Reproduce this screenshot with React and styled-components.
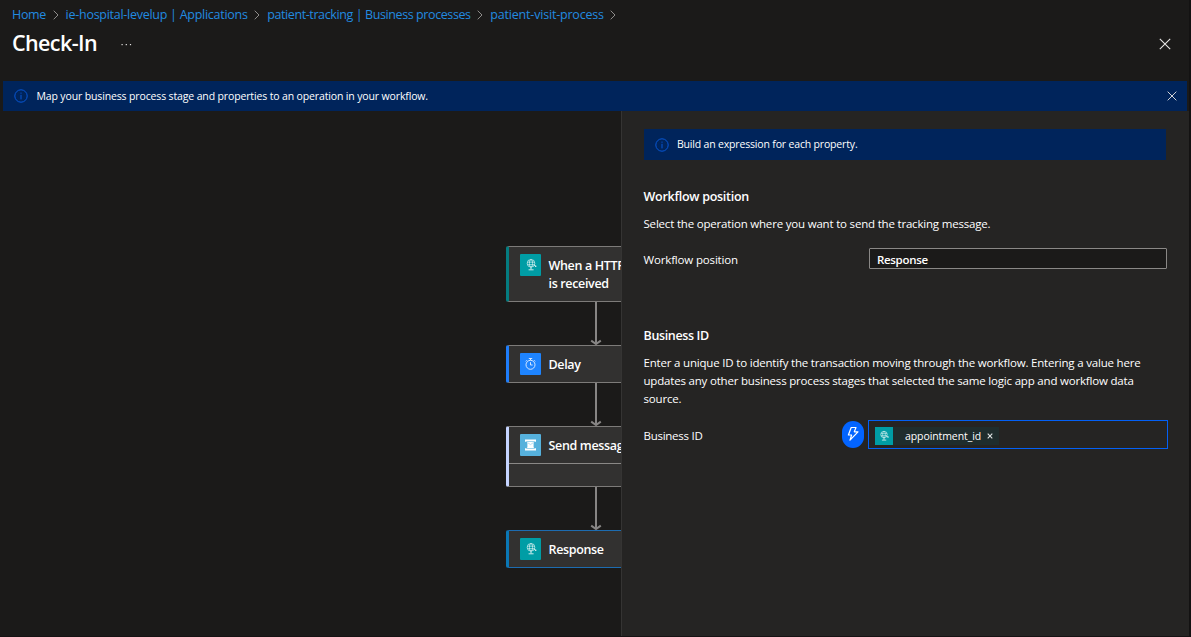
import React from 'react';
import styled, { createGlobalStyle } from 'styled-components';

const GlobalStyle = createGlobalStyle`
  *, *::before, *::after { box-sizing: border-box; }
  body {
    margin: 0;
    background: #1b1a19;
    color: #ffffff;
    font-family: "Open Sans", "Noto Sans", sans-serif;
    overflow: hidden;
  }
`;

const Page = styled.div`
  height: 637px;
  display: flex;
  flex-direction: column;
  background: #1b1a19;
  border-right: 2px solid #131212;
  border-bottom: 1px solid #161213;
`;

const Breadcrumb = styled.nav`
  display: flex;
  align-items: center;
  height: 28px;
  padding-left: 12px;
`;

const Crumb = styled.a`
  flex: none;
  width: ${(p) => p.$width}px;
  padding-top: 2px;
  font-size: 12.5px;
  line-height: 18px;
  letter-spacing: ${(p) => p.$track}px;
  white-space: nowrap;
  color: #228be0;
`;

const CrumbChevron = styled.svg`
  flex: none;
  width: 6px;
  height: 10px;
  margin: 1px 7px 0 6.6px;
  fill: none;
  stroke: #8f8d8b;
`;

const TitleBar = styled.header`
  display: flex;
  align-items: center;
  height: 32px;
  padding: 0 18px 0 12px;
`;

const Title = styled.h1`
  margin: -2px 0 0;
  width: 109px;
  font-size: 21.5px;
  font-weight: 600;
  line-height: 30px;
  letter-spacing: -0.6px;
`;

const MoreDots = styled.svg`
  width: 11px;
  height: 3px;
  fill: #e4e3e2;
`;

const CloseIcon = styled.svg`
  flex: none;
  width: ${(p) => p.$size}px;
  height: ${(p) => p.$size}px;
  margin-left: auto;
  fill: none;
  stroke: #e6e5e4;
  stroke-width: 1.1;
`;

const Banner = styled.div`
  display: flex;
  align-items: center;
  height: 30px;
  margin: 21px 2px 0 3px;
  padding: 0 10px 0 11px;
  background: #00245b;
`;

const Notice = styled.div`
  display: flex;
  align-items: center;
  width: 522px;
  height: 31px;
  padding-left: 11px;
  background: #00245b;
`;

const InfoIcon = styled.svg`
  flex: none;
  width: 14px;
  height: 14px;
  margin-right: 8.5px;
  fill: none;
  stroke: #0757d6;
`;

const BannerText = styled.span`
  font-size: 10.5px;
  line-height: 16px;
  letter-spacing: ${(p) => p.$track}px;
  white-space: nowrap;
`;

const NoticeText = styled(BannerText)`
  margin: -2px 0 0 -0.6px;
`;

const Body = styled.main`
  flex: 1;
  display: flex;
  min-height: 0;
`;

const Canvas = styled.section`
  flex: none;
  width: 621px;
  padding: 135px 0 0 506px;
  overflow: hidden;
`;

const Flow = styled.div`
  display: flex;
  flex-direction: column;
  width: 180px;
`;

const Card = styled.article`
  height: ${(p) => p.$height}px;
  background: #323130;
  border: 1px solid ${(p) => (p.$selected ? '#1d6cb0' : '#7d7b79')};
  border-left: 3px solid ${(p) => p.$accent};
  border-radius: 2px;
`;

const CardHead = styled.div`
  display: flex;
  height: 36px;
  padding: 7px 0 0 11px;
`;

const CardFoot = styled.div`
  height: 23px;
  border-top: 1px solid #8a8886;
`;

const CardTitle = styled.div`
  margin-left: 7.5px;
  padding-top: 3px;
  font-size: 12.5px;
  font-weight: 600;
  line-height: 18px;
  letter-spacing: -0.34px;
  white-space: nowrap;
`;

const IconTile = styled.span`
  flex: none;
  display: flex;
  align-items: center;
  justify-content: center;
  width: ${(p) => p.$width || 21}px;
  height: ${(p) => p.$height || 22}px;
  border-radius: ${(p) => (p.$width ? 0 : 1)}px;
  background: ${(p) => p.$color};
`;

const Connector = styled.svg`
  display: block;
  width: 12px;
  height: 43px;
  margin-left: 84px;
  fill: none;
  stroke: #878584;
  stroke-width: 2;
`;

const Panel = styled.aside`
  flex: 1;
  padding: 18px 0 0 22px;
  background: #252423;
  border-left: 1px solid #353433;
`;

const SectionTitle = styled.h2`
  margin: ${(p) => p.$top}px 0 0 -0.5px;
  font-size: 12.5px;
  font-weight: 600;
  line-height: 18px;
  letter-spacing: ${(p) => p.$track}px;
`;

const Paragraph = styled.p`
  margin: ${(p) => p.$top}px 0 0 -0.5px;
  font-size: 11.5px;
  line-height: 18px;
  letter-spacing: -0.19px;
  white-space: nowrap;
`;

const FieldRow = styled.div`
  display: flex;
  align-items: center;
  height: ${(p) => p.$height}px;
  margin-top: ${(p) => p.$top}px;
`;

const FieldLabel = styled.label`
  flex: none;
  width: ${(p) => p.$width}px;
  margin-left: -0.5px;
  padding-top: 2px;
  font-size: 11.5px;
  line-height: 18px;
  letter-spacing: ${(p) => p.$track}px;
`;

const PositionField = styled.div`
  display: flex;
  align-items: center;
  width: 298px;
  height: 21px;
  padding: 1px 0 0 7px;
  border: 1px solid #8a8886;
  border-radius: 1px;
  background: #1b1a19;
  font-size: 11.5px;
  font-weight: 600;
  letter-spacing: -0.32px;
`;

const DynamicButton = styled.button`
  display: flex;
  align-items: center;
  justify-content: center;
  flex: none;
  width: 22px;
  height: 27px;
  margin: 0 4px 1px 0;
  padding: 0;
  border: 0;
  border-radius: 11px;
  background: #0364ff;
`;

const TokenField = styled.div`
  display: flex;
  align-items: center;
  width: 300px;
  height: 29px;
  padding: 2px 0 0 6px;
  border: 1px solid #0360f5;
`;

const Token = styled.span`
  display: flex;
  align-items: center;
  width: 124px;
  height: 18px;
  background: #1f2d2d;
  font-size: 10.5px;
  line-height: 16px;
  letter-spacing: -0.09px;
`;

const TokenLabel = styled.span`
  width: 81.5px;
  margin-left: 12px;
`;

const TokenRemove = styled.svg`
  width: 6px;
  height: 6px;
  margin-top: 1px;
  fill: none;
  stroke: #e0e4e4;
  stroke-width: 1.1;
`;

function Chevron() {
  return (
    <CrumbChevron viewBox="0 0 6 10">
      <path d="M0.7 0.7 L5 5 L0.7 9.3" />
    </CrumbChevron>
  );
}

function Close({ size }) {
  return (
    <CloseIcon $size={size} viewBox="0 0 12 12">
      <path d="M0.8 0.8 L11.2 11.2 M11.2 0.8 L0.8 11.2" />
    </CloseIcon>
  );
}

function Info() {
  return (
    <InfoIcon viewBox="0 0 14 14">
      <circle cx="7" cy="7" r="6.2" />
      <path d="M7 3.6 V4.7 M7 5.8 V10.4" />
    </InfoIcon>
  );
}

function RequestGlyph({ size = 14 }) {
  return (
    <svg width={size} height={size} viewBox="0 0 14 14" fill="none" stroke="#dff4f4" strokeWidth="0.7">
      <circle cx="7" cy="5.3" r="3.8" />
      <ellipse cx="7" cy="5.3" rx="1.6" ry="3.8" />
      <path d="M3.4 4.2 H10.6 M3.4 6.6 H10.6" strokeWidth="0.6" />
      <path d="M7 9.1 V11.4" strokeWidth="1" />
      <path d="M4.6 11.8 H9.6" strokeWidth="0.9" />
      <path d="M10 7.2 L11.8 8.2" strokeWidth="0.8" />
      <circle cx="11.7" cy="8.2" r="0.8" fill="#dff4f4" stroke="none" />
    </svg>
  );
}

function TimerGlyph() {
  return (
    <svg width="13" height="14" viewBox="0 0 13 14" fill="none" stroke="#e6f0ff" strokeWidth="0.9">
      <circle cx="6.5" cy="7.8" r="4.5" />
      <path d="M4.8 1.5 H8.2 M6.5 1.5 V3.2 M10 3.2 L11.2 4.4 M3 3.2 L1.8 4.4" />
      <path d="M6.5 5.2 V8 H8.6" />
    </svg>
  );
}

function ServiceBusGlyph() {
  return (
    <svg width="13" height="14" viewBox="0 0 13 14" fill="#ffffff">
      <path d="M1 1.4 H12 V3.8 H10.6 V3.2 H2.4 V3.8 H1 Z" />
      <path d="M1 12.6 H12 V10.2 H10.6 V10.8 H2.4 V10.2 H1 Z" />
      <path d="M2.6 3.8 H10.4 L9.6 4.8 V9.2 L10.4 10.2 H2.6 L3.4 9.2 V4.8 Z" />
      <path d="M3.6 4.6 L6.5 6.6 L9.4 4.6" fill="none" stroke="#9ad0ea" strokeWidth="0.7" />
    </svg>
  );
}

function Arrow() {
  return (
    <Connector viewBox="0 0 12 43">
      <path d="M6 0 V41.5" />
      <path d="M1.2 38.6 L6 42 L10.8 38.6" />
    </Connector>
  );
}

export default function App() {
  return (
    <>
      <GlobalStyle />
      <Page>
        <Breadcrumb>
          <Crumb $width={34} $track={-0.33}>Home</Crumb>
          <Chevron />
          <Crumb $width={182} $track={-0.27}>ie-hospital-levelup | Applications</Crumb>
          <Chevron />
          <Crumb $width={203.5} $track={-0.4}>patient-tracking | Business processes</Crumb>
          <Chevron />
          <Crumb $width={113.5} $track={-0.19}>patient-visit-process</Crumb>
          <Chevron />
        </Breadcrumb>
        <TitleBar>
          <Title>Check-In</Title>
          <MoreDots viewBox="0 0 11 3">
            <rect x="0.5" y="1" width="1.2" height="1.2" />
            <rect x="4.7" y="1" width="1.2" height="1.2" />
            <rect x="8.9" y="1" width="1.2" height="1.2" />
          </MoreDots>
          <Close size={12} />
        </TitleBar>
        <Banner>
          <Info />
          <BannerText $track={-0.14}>
            Map your business process stage and properties to an operation in your workflow.
          </BannerText>
          <Close size={10} />
        </Banner>
        <Body>
          <Canvas>
            <Flow>
              <Card $height={56} $accent="#047c80">
                <CardHead>
                  <IconTile $color="#009da5"><RequestGlyph /></IconTile>
                  <CardTitle>When a HTTP request<br />is received</CardTitle>
                </CardHead>
              </Card>
              <Arrow />
              <Card $height={38} $accent="#1e7dfa">
                <CardHead>
                  <IconTile $color="#1e84ff"><TimerGlyph /></IconTile>
                  <CardTitle>Delay</CardTitle>
                </CardHead>
              </Card>
              <Arrow />
              <Card $height={61} $accent="#c5d4ff">
                <CardHead>
                  <IconTile $color="#56b1dc"><ServiceBusGlyph /></IconTile>
                  <CardTitle>Send message</CardTitle>
                </CardHead>
                <CardFoot />
              </Card>
              <Arrow />
              <Card $height={38} $accent="#0a77b5" $selected>
                <CardHead>
                  <IconTile $color="#009da5"><RequestGlyph /></IconTile>
                  <CardTitle>Response</CardTitle>
                </CardHead>
              </Card>
            </Flow>
          </Canvas>
          <Panel>
            <Notice>
              <Info />
              <NoticeText $track={-0.17}>Build an expression for each property.</NoticeText>
            </Notice>
            <SectionTitle $top={28} $track={-0.27}>Workflow position</SectionTitle>
            <Paragraph $top={9}>
              Select the operation where you want to send the tracking message.
            </Paragraph>
            <FieldRow $top={15} $height={21}>
              <FieldLabel $width={225.5} $track={-0.16}>Workflow position</FieldLabel>
              <PositionField>Response</PositionField>
            </FieldRow>
            <SectionTitle $top={58} $track={-0.36}>Business ID</SectionTitle>
            <Paragraph $top={9}>
              Enter a unique ID to identify the transaction moving through the workflow. Entering a value here
              <br />
              updates any other business process stages that selected the same logic app and workflow data
              <br />
              source.
            </Paragraph>
            <FieldRow $top={12} $height={29}>
              <FieldLabel $width={198.5} $track={-0.26}>Business ID</FieldLabel>
              <DynamicButton aria-label="Insert dynamic content">
                <svg width="14" height="16" viewBox="0 0 14 16" fill="none" stroke="#ffffff" strokeWidth="1.2" strokeLinejoin="round">
                  <path d="M5.2 1.5 H10 L8.3 5.8 H12 L4 14.2 L5.6 9 H2.4 Z" />
                </svg>
              </DynamicButton>
              <TokenField>
                <Token>
                  <IconTile $width={18} $height={18} $color="#009da5"><RequestGlyph size={12} /></IconTile>
                  <TokenLabel>appointment_id</TokenLabel>
                  <TokenRemove viewBox="0 0 6 6">
                    <path d="M0.7 0.7 L5.3 5.3 M5.3 0.7 L0.7 5.3" />
                  </TokenRemove>
                </Token>
              </TokenField>
            </FieldRow>
          </Panel>
        </Body>
      </Page>
    </>
  );
}
